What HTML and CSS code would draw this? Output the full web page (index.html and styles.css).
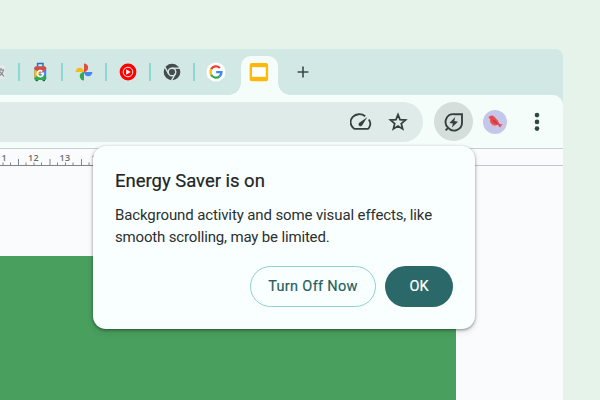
FILE: index.html
```html
<!DOCTYPE html>
<html lang="en">
<head>
<meta charset="utf-8">
<title>Energy Saver</title>
<link rel="stylesheet" href="styles.css">
</head>
<body>
<main class="window">
  <div class="tabs">
    <div class="tab tab-first">
      <svg width="6" height="16" viewBox="0 0 6 16"><rect x="-9" y="1" width="14" height="14" rx="1.500" fill="#e3e8e8"/><path d="M0 6h4.200M1 4v2M3.500 6C3 8.500 1.500 10.500 0 11.500M0 7.500L4 12.500" fill="none" stroke="#7a8489" stroke-width="1.100"/></svg>
    </div>
    <div class="tab">
      <svg width="20" height="20" viewBox="0 0 20 20"><path d="M7.600 5V1.500h5.400V5" fill="none" stroke="#2b6fb5" stroke-width="1.500"/><rect x="5.400" y="17" width="2.800" height="2.300" rx="1" fill="#276f43"/><rect x="12.400" y="17" width="2.800" height="2.300" rx="1" fill="#276f43"/><rect x="4.400" y="4.500" width="11.800" height="13.500" rx="1.500" fill="#4285f4"/><path d="M4.400 7.500V6q0-1.500 1.500-1.500h8.800q1.500 0 1.500 1.500v1.500L10.300 11z" fill="#e0483c"/><path d="M4.400 7.500L10.300 11 4.400 17z" fill="#f2b51c"/><path d="M4.400 16L10 12l6.200 3v1.500q0 1.500-1.500 1.500H5.900q-1.500 0-1.500-1.500z" fill="#34a853"/><path d="M12.300 9.300A3 3 0 1 0 13.300 11.400H10.600" fill="none" stroke="#fff" stroke-width="1.700"/></svg>
    </div>
    <div class="tab">
      <svg width="18" height="18" viewBox="0 0 18 18"><path d="M9 9V.6a4.200 4.200 0 0 1 4.200 4.200A4.200 4.200 0 0 1 9 9z" fill="#e34c3e"/><path d="M9 9H.6a4.200 4.200 0 0 1 8.400 0z" fill="#f7bc16"/><path d="M9 9v8.400a4.200 4.200 0 0 1 0-8.400z" fill="#35a656"/><path d="M9 9h8.400a4.200 4.200 0 0 1-8.400 0z" fill="#4285f4"/></svg>
    </div>
    <div class="tab">
      <svg width="18" height="18" viewBox="0 0 18 18"><circle cx="9" cy="9" r="8.400" fill="#f00"/><circle cx="9" cy="9" r="4.800" fill="none" stroke="#fff" stroke-width=".9"/><path d="M7.200 6.200l4.500 2.800-4.500 2.800z" fill="#fff"/></svg>
    </div>
    <div class="tab">
      <svg width="18" height="18" viewBox="0 0 18 18"><circle cx="9" cy="9" r="8.300" fill="#454b4e"/><g fill="none" stroke="#d1e8e5" stroke-width="1.400"><circle cx="9" cy="9" r="3.800"/><path d="M9 5.200h8"/><path d="M9 5.200h8" transform="rotate(120 9 9)"/><path d="M9 5.200h8" transform="rotate(240 9 9)"/></g></svg>
    </div>
    <div class="tab">
      <svg width="20" height="20" viewBox="0 0 20 20"><circle cx="10" cy="10" r="9.600" fill="#fff"/><g fill="none" stroke-width="2.300"><path d="M5.100 7.300a5.600 5.600 0 0 1 8.800-1.300" stroke="#ea4335"/><path d="M5.100 12.700a5.600 5.600 0 0 1 0-5.400" stroke="#fbbc05"/><path d="M13.600 14.300a5.600 5.600 0 0 1-8.500-1.600" stroke="#34a853"/><path d="M10.200 10.100H15.500a5.600 5.600 0 0 1-1.900 4.200" stroke="#4285f4"/></g></svg>
    </div>
    <div class="active-tab">
      <svg width="20" height="20" viewBox="0 0 20 20"><rect x=".7" y="1" width="18.400" height="18.200" rx="2" fill="#fbb90a"/><rect x="3" y="5.200" width="13.800" height="9.600" fill="#fff"/></svg>
    </div>
    <svg class="plus" width="12" height="12" viewBox="0 0 12 12"><path d="M6 .6v10.800M.6 6h10.800" stroke="#3d484a" stroke-width="1.600"/></svg>
  </div>
  <div class="toolbar">
    <div class="address">
      <svg width="22" height="20" viewBox="0 0 22 20"><path d="M15.200 4.200A8.600 7.800 0 0 0 3.600 16.200Q4 16.900 4.700 16.900H17.600Q18.300 16.900 18.700 16.200A8.600 7.800 0 0 0 18.800 7.500" fill="none" stroke="#34413f" stroke-width="1.800"/><path d="M17.200 5.200L9.700 10.400A2 2 0 1 0 12.400 13z" fill="#34413f"/></svg>
      <svg width="20" height="20" viewBox="0 0 20 20"><path d="M10 2.700l2 5 5.500.4-4.200 3.500 1.300 5.300L10 14l-4.600 2.900 1.300-5.300-4.200-3.500L8 7.700z" fill="none" stroke="#34413f" stroke-width="1.800"/></svg>
    </div>
    <div class="saver">
      <svg width="22" height="22" viewBox="0 0 22 22"><path d="M5.200 16.800A7.800 7.800 0 0 1 11 3.200H19V11A7.900 7.900 0 0 1 5.200 16.800L2.600 19.400" fill="none" stroke="#35413f" stroke-width="1.900"/><path d="M12.200 6L6.400 11.900l3.500.6-1 4 6.100-5.700-3.700-.9z" fill="#35413f"/></svg>
    </div>
    <svg class="avatar" width="24" height="24" viewBox="0 0 24 24"><circle cx="12" cy="12" r="12" fill="#c4c7e9"/><path d="M5.300 7.300l2.300-1.500q2-.7 3.500.8l3.500 3.600 1.800 3.500 3.300 1-.8.900-1.300-.2.200 2-1.300-.3-1.700-2.300q-3.600 1.800-6-.5Q6.500 12.500 7 9z" fill="#e84b4d"/><path d="M9.200 9.500q3.600.8 5.500 4.500-3.200-.2-5.500-4.500" fill="#c83645"/><path d="M10 14.500l-.7 2M12 15l.2 2" stroke="#f0a09b" stroke-width=".7"/></svg>
    <svg class="dots" width="6" height="20" viewBox="0 0 6 20"><g fill="#2f4743"><circle cx="3" cy="3.100" r="2.300"/><circle cx="3" cy="9.900" r="2.300"/><circle cx="3" cy="16.600" r="2.300"/></g></svg>
  </div>
  <div class="ruler">
    <svg width="110" height="17" viewBox="0 0 110 17"><path d="M18.500 10v7M50 10v7M81.500 10v7M3 13.500V17M10.500 13.500V17M26 13.500V17M34 13.500V17M41.500 13.500V17M57.500 13.500V17M65.500 13.500V17M73 13.500V17M89 13.500V17" stroke="#808587"/><g class="numbers"><text x="-4" y="11.500">11</text><text x="33.500" y="11.500" text-anchor="middle">12</text><text x="65" y="11.500" text-anchor="middle">13</text><text x="97" y="11.500" text-anchor="middle">14</text></g><path d="M0 16.500h93" stroke="#808587"/></svg>
  </div>
  <div class="slide"></div>
</main>
<section class="dialog" role="dialog">
  <h1>Energy Saver is on</h1>
  <p><span class="line-one">Background activity and some visual effects, like</span><br><span class="line-two">smooth scrolling, may be limited.</span></p>
  <div class="actions"><button class="off">Turn Off Now</button><button class="ok">OK</button></div>
</section>
</body>
</html>
```
FILE: styles.css
```css
* { box-sizing: border-box; }
body {
  margin: 0;
  width: 600px;
  height: 400px;
  overflow: hidden;
  padding-top: 49px;
  background: #e5f3ea;
  font-family: Roboto, "Liberation Sans", sans-serif;
}
svg { display: block; flex: none; }
.window {
  width: 563px;
  height: 351px;
  display: flex;
  flex-direction: column;
  background: linear-gradient(#d1e8e5 0 60px, #fafbfc 60px);
  border-radius: 0 8px 0 0;
}
.tabs { height: 46px; display: flex; align-items: center; flex: none; }
.tab {
  width: 43.800px;
  height: 18px;
  background: linear-gradient(90deg, #92d6d4 2.300px, transparent 2.300px);
  padding-left: 2px;
  display: flex;
  align-items: center;
  justify-content: center;
}
.tab-first { width: 17.500px; padding: 0; background: none; justify-content: flex-start; }
.active-tab {
  position: relative;
  align-self: flex-end;
  width: 37px;
  height: 39px;
  margin-left: 4.500px;
  padding-top: 6px;
  border-radius: 10px 10px 0 0;
  background: #f4fdfa;
  display: flex;
  justify-content: center;
}
.active-tab::before, .active-tab::after {
  content: "";
  position: absolute;
  bottom: 0;
  width: 12px;
  height: 12px;
}
.active-tab::before { right: 100%; background: radial-gradient(circle at 0 0, transparent 11.500px, #f4fdfa 12px); }
.active-tab::after { left: 100%; background: radial-gradient(circle at 100% 0, transparent 11.500px, #f4fdfa 12px); }
.plus { margin-left: 19px; }
.toolbar {
  height: 53px;
  flex: none;
  display: flex;
  align-items: center;
  background: #f4fdfa;
  border-radius: 0 10px 0 0;
}
.address {
  width: 423px;
  height: 40px;
  border-radius: 0 20px 20px 0;
  background: #deebe9;
  display: flex;
  align-items: center;
  justify-content: flex-end;
  gap: 16px;
  padding-right: 15px;
}
.saver {
  width: 39px;
  height: 39px;
  margin-left: 11px;
  border-radius: 50%;
  background: #d5dedb;
  display: flex;
  align-items: center;
  justify-content: center;
}
.avatar { margin-left: 10px; }
.dots { margin-left: 27px; }
.ruler {
  height: 18px;
  flex: none;
  background: #fafbfc;
  border-top: 1px solid #c9cfd0;
  box-shadow: inset 0 -1px #c3c7c9;
}
.numbers { font: 600 9px "Open Sans", sans-serif; letter-spacing: .3px; fill: #686c6e; }
.slide { width: 455.500px; height: 144.500px; margin-top: auto; flex: none; background: #499f5e; }
.dialog {
  position: absolute;
  left: 93px;
  top: 146px;
  width: 382px;
  height: 183px;
  padding: 23px 22px 22px;
  border-radius: 13px;
  background: #f9fffe;
  box-shadow: 0 1px 3px rgba(0, 0, 0, .42), 0 3px 7px rgba(0, 0, 0, .1);
  color: #202526;
}
h1 { margin: 0; font-size: 18.500px; font-weight: 400; -webkit-text-stroke: .2px #202526; line-height: 24px; letter-spacing: -.02px; white-space: nowrap; }
p { margin: 11px 0 0; font-size: 15px; line-height: 22px; white-space: nowrap; color: #2b3031; }
.line-one { letter-spacing: -.12px; }
.line-two { letter-spacing: -.16px; }
.actions { display: flex; justify-content: flex-end; gap: 9px; margin-top: 18px; }
button {
  height: 41px;
  padding: 0;
  border: 0;
  border-radius: 21px;
  font: 400 14.500px Roboto, sans-serif;
  -webkit-text-stroke: .2px currentColor;
  white-space: nowrap;
}
.off { width: 126px; border: 1px solid #8bd2d0; background: transparent; color: #28605f; letter-spacing: .33px; }
.ok { width: 68px; background: #2b6869; color: #fff; }
```
